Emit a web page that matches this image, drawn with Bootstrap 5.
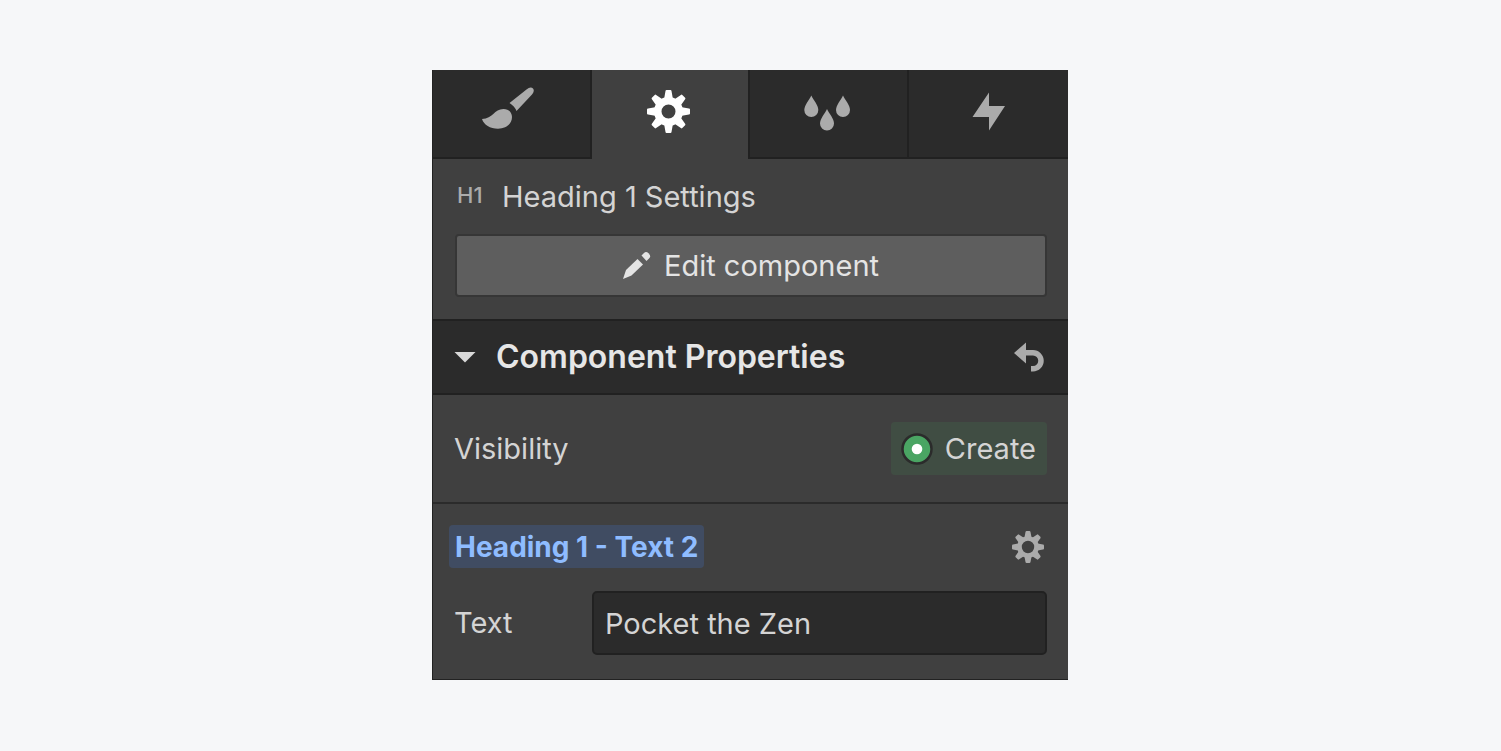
<!DOCTYPE html>
<html lang="en">
<head>
<meta charset="utf-8">
<meta name="viewport" content="width=device-width, initial-scale=1">
<title>Element settings</title>
<link href="https://cdn.jsdelivr.net/npm/bootstrap@5.3.0/dist/css/bootstrap.min.css" rel="stylesheet">
<style>
  body { background: #f6f7f9; font-family: Inter, "Liberation Sans", sans-serif; color: #d4d4d4; }
  .stage { padding: 70px 17px 70px 16px; }
  .panel { max-width: 636px; background: #404040; border: 1px solid #222; border-width: 0 0 1px 1px; font-size: 29px; line-height: 36px; }
  .panel svg { display: block; flex: none; }
  .tab-bar { display: grid; grid-template-columns: 159fr 156fr 161fr 159fr; }
  .tab-item { height: 89px; padding: 0 0 4px; background: #2b2b2b; color: #ababab; border: 0 solid #212121; border-bottom-width: 2px; }
  .tab-item.edge-end { border-right-width: 2px; }
  .tab-item.edge-start { border-left-width: 2px; }
  .tab-item.active { background: #404040; color: #fff; border-color: #404040; }
  .heading-area { padding: 18px 21px 22px 22px; }
  .tag-label { width: 47px; padding: 0 0 3px 2px; font-size: 22px; font-weight: 500; color: #ababab; }
  .edit-btn { height: 63px; margin-top: 18px; background: #5e5e5e; border: 2px solid #363636; border-radius: 4px; color: #e4e4e4; gap: 13px; font-size: inherit; line-height: inherit; }
  .props-bar { height: 76px; padding: 0 23px 0 21px; background: #2b2b2b; border: solid #212121; border-width: 2px 0; }
  .props-title { font-size: 32px; line-height: 36px; font-weight: 600; color: #e6e6e6; gap: 20px; }
  .icon-btn { background: none; border: 0; padding: 0; color: #ababab; }
  .vis-row { padding: 27px 21px; border-bottom: 2px solid #2b2b2b; }
  .create-btn { height: 53px; padding: 0 11px 0 10px; background: #404d43; border: 0; border-radius: 4px; color: #d4d4d4; gap: 12px; }
  .field-area { padding: 21px 21px 24px 16px; }
  .field-name { padding: 4px 6px 3px; background: #404c62; border-radius: 4px; color: #8fbcff; font-size: 28px; font-weight: 700; }
  .field-row { margin-top: 23px; padding-left: 5px; }
  .field-row label { width: 138px; flex: none; }
  .field-row input, .field-row input:focus { height: 64px; min-width: 0; padding: 0 11px; background: #2b2b2b; border: 2px solid #212121; border-radius: 5px; color: #d4d4d4; font-size: inherit; line-height: inherit; }
</style>
<script src="https://cdn.jsdelivr.net/npm/bootstrap@5.3.0/dist/js/bootstrap.bundle.min.js" defer></script>
</head>
<body>
<main class="stage">
  <section class="panel mx-auto">
    <nav class="tab-bar" aria-label="Panels">
      <button class="tab-item edge-end d-flex align-items-center justify-content-center" aria-label="Style">
        <svg width="64" height="56" viewBox="479 84 64 56" fill="currentColor"><path d="M508.500 103 L525.500 89.500 Q529.500 86.300 532 88.500 Q534 90.500 531 94.500 L515.500 111 Q513.500 106 508.500 103Z"/><path d="M481 119 C492 118.800 493 109 502.500 109 C508 109 511 113 511 117 C511 124 505 128.700 497 128.700 C489 128.700 483 125 481 119Z"/></svg>
      </button>
      <button class="tab-item active d-flex align-items-center justify-content-center" aria-label="Settings">
        <svg width="48" height="48" viewBox="-22.500 -23.500 48 48" fill="currentColor"><defs><path id="tooth" d="M-4.500 -12 L-3 -20.500 Q-2.900 -21.500 -2 -21.500 H2 Q2.900 -21.500 3 -20.500 L4.500 -12Z"/></defs>
          <circle r="10.750" fill="none" stroke="currentColor" stroke-width="7.500"/>
          <use href="#tooth"/><use href="#tooth" transform="rotate(45)"/><use href="#tooth" transform="rotate(90)"/><use href="#tooth" transform="rotate(135)"/><use href="#tooth" transform="rotate(180)"/><use href="#tooth" transform="rotate(225)"/><use href="#tooth" transform="rotate(270)"/><use href="#tooth" transform="rotate(315)"/></svg>
      </button>
      <button class="tab-item edge-start edge-end d-flex align-items-center justify-content-center" aria-label="Style manager">
        <svg width="52" height="48" viewBox="803 88 52 48" fill="currentColor"><defs><path id="drop" d="M0 0 C2 4.500 7 9.500 7 14.500 A7 7 0 0 1 -7 14.500 C-7 9.500 -2 4.500 0 0Z"/></defs><use href="#drop" x="811.300" y="95.500"/><use href="#drop" x="843" y="95.500"/><use href="#drop" x="827" y="109"/></svg>
      </button>
      <button class="tab-item d-flex align-items-center justify-content-center" aria-label="Interactions">
        <svg width="48" height="48" viewBox="965 88 48 48" fill="currentColor"><path d="M989 92.500 V106 H1005 L989 130.500 V117 H972.500Z"/></svg>
      </button>
    </nav>

    <div class="heading-area">
      <div class="d-flex align-items-center"><span class="tag-label">H1</span><span>Heading 1 Settings</span></div>
      <button class="edit-btn w-100 d-flex align-items-center justify-content-center">
        <svg width="28" height="28" viewBox="623 252 28 28" fill="currentColor"><path d="M623 279 L626 270 L637.500 259 L643 264.500 L631.500 275.500Z"/><path d="M641.500 255.500 L644 253 Q646 251 648.500 253.200 Q651.500 256 649 258.500 L646.500 261Z"/></svg>
        <span>Edit component</span>
      </button>
    </div>

    <div class="props-bar d-flex align-items-center justify-content-between">
      <h2 class="props-title d-flex align-items-center m-0">
        <svg width="22" height="12" viewBox="0 0 22 12" fill="#d9d9d9"><path d="M.5 1 H21.500 L11 11.500Z"/></svg>
        <span>Component Properties</span>
      </h2>
      <button class="icon-btn" aria-label="Reset">
        <svg width="32" height="32" viewBox="1013 341 32 32" fill="currentColor"><path d="M1014 353 L1026 342.500 V350 H1033 A10.700 10.700 0 0 1 1033 371.500 H1031 V366 H1033 A5.200 5.200 0 0 0 1033 355.500 H1026 V363.500Z"/></svg>
      </button>
    </div>

    <div class="vis-row d-flex align-items-center justify-content-between">
      <span>Visibility</span>
      <button class="create-btn d-flex align-items-center">
        <svg width="32" height="32" viewBox="-16 -16 32 32"><circle r="14.500" fill="#4aa563" stroke="#2b2b2b" stroke-width="2.500"/><circle r="5.300" fill="#fff"/></svg>
        <span>Create</span>
      </button>
    </div>

    <div class="field-area">
      <div class="d-flex align-items-center justify-content-between">
        <span class="field-name">Heading 1 - Text 2</span>
        <button class="icon-btn" aria-label="Field settings">
          <svg width="35" height="34" viewBox="-16 -17 35 34" fill="currentColor"><defs><path id="cog" d="M-3.500 -9.500 L-2.500 -15 Q-2.300 -16 -1.500 -16 H1.500 Q2.300 -16 2.500 -15 L3.500 -9.500Z"/></defs>
            <circle r="8.500" fill="none" stroke="currentColor" stroke-width="4.600"/>
            <use href="#cog"/><use href="#cog" transform="rotate(45)"/><use href="#cog" transform="rotate(90)"/><use href="#cog" transform="rotate(135)"/><use href="#cog" transform="rotate(180)"/><use href="#cog" transform="rotate(225)"/><use href="#cog" transform="rotate(270)"/><use href="#cog" transform="rotate(315)"/></svg>
        </button>
      </div>
      <div class="field-row d-flex align-items-center">
        <label for="heading-text">Text</label>
        <input class="form-control" id="heading-text" type="text" value="Pocket the Zen">
      </div>
    </div>
  </section>
</main>
</body>
</html>
